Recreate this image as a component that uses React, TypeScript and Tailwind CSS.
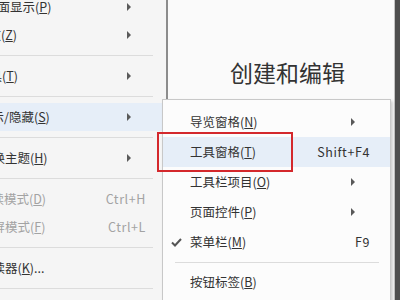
import React from 'react';

type Item =
  | { kind: 'sep' }
  | {
      kind: 'item';
      label: string;
      key: string;
      tail?: string;
      shift?: string;
      arrow?: boolean;
      shortcut?: string;
      disabled?: boolean;
      active?: boolean;
      checked?: boolean;
    };

const font = { fontFamily: '"Noto Sans CJK SC", "Noto Sans", sans-serif' };

// 左侧主菜单（被窗口左边截断）
const mainItems: Item[] = [
  { kind: 'item', label: '页面显示', key: 'P', shift: 'ml-[-15px]', arrow: true },
  { kind: 'item', label: '缩放', key: 'Z', shift: 'ml-[-24px]', arrow: true },
  { kind: 'sep' },
  { kind: 'item', label: '工具', key: 'T', shift: 'ml-[-23px]', arrow: true },
  { kind: 'sep' },
  { kind: 'item', label: '显示/隐藏', key: 'S', shift: 'ml-[-21px]', arrow: true, active: true },
  { kind: 'sep' },
  { kind: 'item', label: '更换主题', key: 'H', shift: 'ml-[-20px]', arrow: true },
  { kind: 'sep' },
  { kind: 'item', label: '阅读模式', key: 'D', shift: 'ml-[-21px]', shortcut: 'Ctrl+H', disabled: true },
  { kind: 'item', label: '全屏模式', key: 'F', shift: 'ml-[-20px]', shortcut: 'Ctrl+L', disabled: true },
  { kind: 'sep' },
  { kind: 'item', label: '阅读器', key: 'K', tail: '...', shift: 'ml-[-20px]' },
  { kind: 'sep' },
];

// 子菜单
const subItems: Item[] = [
  { kind: 'item', label: '导览窗格', key: 'N', arrow: true },
  { kind: 'item', label: '工具窗格', key: 'T', shortcut: 'Shift+F4', active: true },
  { kind: 'item', label: '工具栏项目', key: 'O', arrow: true },
  { kind: 'item', label: '页面控件', key: 'P', arrow: true },
  { kind: 'item', label: '菜单栏', key: 'M', shortcut: 'F9', checked: true },
  { kind: 'sep' },
  { kind: 'item', label: '按钮标签', key: 'B' },
];

function Arrow() {
  return (
    <span className="mr-[35px] h-0 w-0 border-y-[4px] border-l-[4px] border-y-transparent border-l-[#5a5a5a]" />
  );
}

function MainMenu() {
  return (
    <div className="relative w-[166px] shrink-0 overflow-hidden bg-[#f5f5f5]">
      <div className="mt-[-7px]">
        {mainItems.map((it, i) =>
          it.kind === 'sep' ? (
            <div key={i} className="flex h-[13px] items-center">
              <div className="h-px w-[153px] bg-[#dcdcdc]" />
            </div>
          ) : (
            <div
              key={i}
              className={`flex h-[28px] items-center text-[12.5px] ${it.active ? 'bg-[#e6eef8]' : ''} ${
                it.disabled ? 'text-[#a3a3a3]' : 'text-[#333333]'
              }`}
            >
              <span className={`flex-1 whitespace-nowrap ${it.shift}`}>
                {it.label}(<u>{it.key}</u>){it.tail}
              </span>
              {it.arrow && <Arrow />}
              {it.shortcut && <span className="mr-[20px] tracking-[0.6px]">{it.shortcut}</span>}
            </div>
          )
        )}
      </div>
    </div>
  );
}

function SubMenu() {
  return (
    <div className="absolute left-[162px] top-[99px] h-[220px] w-[229px] border border-[#c8c8c8] bg-[#fcfcfc] pt-[7px] shadow-[2px_2px_3px_rgba(0,0,0,0.18)]">
      {subItems.map((it, i) =>
        it.kind === 'sep' ? (
          <div key={i} className="flex h-[10px] items-center pl-[12px]">
            <div className="h-px w-[204px] bg-[#dcdcdc]" />
          </div>
        ) : (
          <div
            key={i}
            className={`relative flex h-[30px] items-center text-[12.5px] text-[#333333] ${
              it.active ? 'bg-[#e6eef8]' : ''
            }`}
          >
            {it.checked && (
              <svg className="absolute left-[8px] top-[11px]" width="11" height="9" viewBox="0 0 11 9">
                <path d="M1 4.5 L4 7.5 L10 1" fill="none" stroke="#555" strokeWidth="2" />
              </svg>
            )}
            <span className="flex-1 whitespace-nowrap pl-[27px]">
              {it.label}(<u>{it.key}</u>)
            </span>
            {it.arrow && <Arrow />}
            {it.shortcut && <span className="mr-[20px] tracking-[0.6px]">{it.shortcut}</span>}
          </div>
        )
      )}
    </div>
  );
}

export default function App() {
  return (
    <div className="relative flex h-[300px] w-[400px] overflow-hidden bg-[#fafafa]" style={font}>
      <MainMenu />
      <div className="w-[2px] shrink-0 bg-[#8c8c8c]" />
      <div className="flex-1 border-r border-[#c4c4c4] bg-[#fafafa] pl-[62px] pt-[56px]">
        <div className="text-[23px] leading-[32px] text-[#333333]">创建和编辑</div>
      </div>
      <div className="w-[5px] shrink-0 bg-[#4e4e4e]" />
      <SubMenu />
      {/* 红色标注框 */}
      <div className="absolute left-[157px] top-[132px] h-[40px] w-[136px] border-2 border-[#d4282c]" />
    </div>
  );
}
